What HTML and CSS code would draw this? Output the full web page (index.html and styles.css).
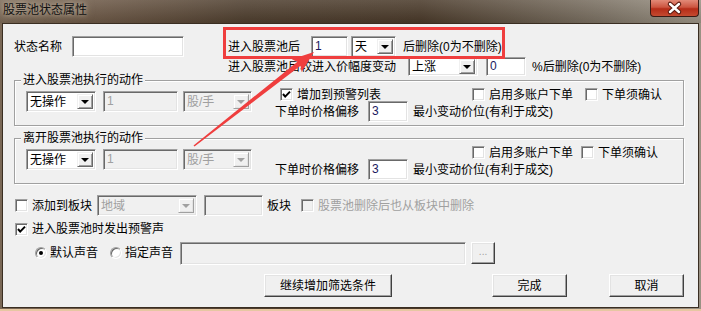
FILE: index.html
```html
<!doctype html>
<html>
<head>
<meta charset="UTF-8">
<title>股票池状态属性</title>
<link rel="stylesheet" href="styles.css">
</head>
<body>
<div class="win">
  <div class="title">
    <span class="caption">股票池状态属性</span>
    <span class="close">
      <svg width="47" height="16" viewBox="0 0 47 16">
        <path d="M19 4 L28 12 M28 4 L19 12" stroke="#5a1a10" stroke-width="4.5" stroke-linecap="round"/>
        <path d="M19 4 L28 12 M28 4 L19 12" stroke="#fff" stroke-width="2.4" stroke-linecap="round"/>
      </svg>
    </span>
  </div>

  <div class="client">
    <!-- 第一行 -->
    <div class="row r1">
      <span>状态名称</span>
      <div class="field name"></div>
      <span class="after-name">进入股票池后</span>
      <div class="field days num">1</div>
      <div class="combo unit"><span class="v">天</span><i class="drop"></i></div>
      <span class="tail">后删除(0为不删除)</span>
    </div>
    <div class="row r2">
      <span>进入股票池后较进入价幅度变动</span>
      <div class="combo trend"><span class="v">上涨</span><i class="drop"></i></div>
      <div class="field pct num">0</div>
      <span class="tail2">%后删除(0为不删除)</span>
    </div>

    <!-- 进入 -->
    <div class="group g1">
      <span class="legend">进入股票池执行的动作</span>
      <div class="acts">
        <div class="combo op"><span class="v">无操作</span><i class="drop"></i></div>
        <div class="field qty off">1</div>
        <div class="combo per off"><span class="v">股/手</span><i class="drop"></i></div>
      </div>
      <div class="opts">
        <div class="line1">
          <label class="chk w1"><i class="box on"><svg width="11" height="11" viewBox="0 0 11 11"><path d="M2 5 L4.2 7.6 L9 2.6" fill="none" stroke="#000" stroke-width="2"/></svg></i>增加到预警列表</label>
          <label class="chk w2"><i class="box"></i>启用多账户下单</label>
          <label class="chk"><i class="box"></i>下单须确认</label>
        </div>
        <div class="line2">
          <span>下单时价格偏移</span>
          <div class="field off3 num">3</div>
          <span class="tick">最小变动价位(有利于成交)</span>
        </div>
      </div>
    </div>

    <!-- 离开 -->
    <div class="group g2">
      <span class="legend">离开股票池执行的动作</span>
      <div class="acts">
        <div class="combo op"><span class="v">无操作</span><i class="drop"></i></div>
        <div class="field qty off">1</div>
        <div class="combo per off"><span class="v">股/手</span><i class="drop"></i></div>
      </div>
      <div class="opts">
        <div class="line1 skip">
          <label class="chk w3"><i class="box"></i>启用多账户下单</label>
          <label class="chk"><i class="box"></i>下单须确认</label>
        </div>
        <div class="line2">
          <span>下单时价格偏移</span>
          <div class="field off3 num">3</div>
          <span class="tick">最小变动价位(有利于成交)</span>
        </div>
      </div>
    </div>

    <div class="row bk">
      <label class="chk"><i class="box"></i>添加到板块</label>
      <div class="combo area off"><span class="v">地域</span><i class="drop"></i></div>
      <div class="field blk off"></div>
      <span class="bk-lbl">板块</span>
      <label class="chk dim"><i class="box off"></i>股票池删除后也从板块中删除</label>
    </div>

    <div class="row warn">
      <label class="chk"><i class="box on"><svg width="11" height="11" viewBox="0 0 11 11"><path d="M2 5 L4.2 7.6 L9 2.6" fill="none" stroke="#000" stroke-width="2"/></svg></i>进入股票池时发出预警声</label>
    </div>

    <div class="row sound">
      <label class="rad"><i class="dot on"></i>默认声音</label>
      <label class="rad r-2"><i class="dot"></i>指定声音</label>
      <div class="field path off"></div>
      <div class="btn browse">...</div>
    </div>

    <div class="row btns">
      <div class="btn more">继续增加筛选条件</div>
      <div class="btn ok">完成</div>
      <div class="btn cancel">取消</div>
    </div>
  </div>

  <div class="mark"></div>
  <svg class="arrow" width="701" height="311" viewBox="0 0 701 311">
    <polygon points="194.5,146.6 300.5,65.7 301.6,71.9 314,52 291.8,59.3 297.5,61.7 193.5,145.4" fill="#ef3e3e"/>
  </svg>
</div>
</body>
</html>
```

FILE: styles.css
```css
body{margin:0;font:12px/14px "Liberation Sans","Noto Sans CJK SC",sans-serif;color:#000;}
.win{position:relative;width:701px;height:311px;overflow:hidden;display:flex;flex-direction:column;
  background:linear-gradient(to top,#e6c7a2 0,#e6c7a2 2px,transparent 2px),
  linear-gradient(90deg,#7a6856 0%,#6a5644 14%,#4d3d2d 35%,#483828 60%,#7a7062 86%,#9a9284 100%);}
.title{height:23px;display:flex;align-items:flex-start;justify-content:space-between;
  background:linear-gradient(180deg,rgba(255,255,255,.14),rgba(0,0,0,.08));}
.caption{margin:3px 0 0 3px;line-height:14px;color:#111;
  text-shadow:0 0 5px rgba(215,200,180,.9),0 0 10px rgba(200,185,160,.6);}
.close{width:47px;height:16px;margin-right:2px;border:1px solid #3a1a14;border-top:0;border-radius:0 0 4px 4px;
  background:linear-gradient(180deg,#e28a78 0%,#cc5540 45%,#b52c18 55%,#c44a30 100%);display:flex;}
.close svg{display:block;}

.client{flex:1;margin:0 2px 3px 2px;border:1px solid #3a2e22;background:#f0f0f0;}

.row{display:flex;align-items:center;}
.r1{margin-top:12px;height:21px;padding-left:11px;}
.r2{height:19px;padding-left:225px;}
.after-name{margin-left:44px;}
.tail{margin-left:7px;}
.tail2{margin-left:6px;}

/* 凹陷输入框 */
.field,.combo{box-sizing:border-box;height:21px;border:1px solid;border-color:#a0a0a0 #fff #fff #a0a0a0;
  box-shadow:inset 1px 1px 0 #696969,inset -1px -1px 0 #e3e3e3;background:#fff;display:flex;align-items:center;}
.field{padding:0 3px;}
.num{color:#1a1a60;align-items:flex-start;padding-top:2px;}
.off{background:#f0f0f0;color:#a0a0a0;}
.combo{padding:2px 2px 2px 3px;}
.combo .v{flex:1;}
.drop{box-sizing:border-box;width:16px;align-self:stretch;border:1px solid;border-color:#f0f0f0 #696969 #696969 #f0f0f0;
  box-shadow:inset 1px 1px 0 #fff,inset -1px -1px 0 #a0a0a0;background:#f0f0f0;display:flex;align-items:center;justify-content:center;}
.drop::after{content:"";border-left:4px solid transparent;border-right:4px solid transparent;border-top:4px solid #000;margin-top:1px;}
.off .drop::after{border-top-color:#a0a0a0;}
.off .drop{border-color:#f0f0f0 #a0a0a0 #a0a0a0 #f0f0f0;box-shadow:inset 1px 1px 0 #fff,inset -1px -1px 0 #e3e3e3;}

.name{margin-left:10px;width:112px;}
.days{margin-left:11px;width:37px;}
.unit{margin-left:3px;width:45px;}
.trend{margin-left:12px;width:70px;height:19px;padding-top:1px;padding-bottom:1px;}
.pct{margin-left:8px;width:40px;height:19px;padding-top:1px;}

/* 分组框 */
.group{position:relative;box-sizing:border-box;width:670px;height:46px;margin-left:11px;
  border:1px solid #a0a0a0;box-shadow:inset 1px 1px 0 #fff,1px 1px 0 #fff;display:flex;align-items:flex-start;padding:7px 0 0 11px;}
.g1{margin-top:4px;}
.g2{margin-top:12px;}
.legend{position:absolute;top:-8px;left:6px;padding:0 2px;background:#f0f0f0;}
.acts{display:flex;margin-top:3px;}
.op{width:70px;}
.qty{width:75px;margin-left:7px;align-items:flex-start;padding-top:2px;}
.per{width:69px;margin-left:5px;}
.opts{margin-left:23px;display:flex;flex-direction:column;}
.line1{height:13px;display:flex;align-items:center;padding-left:5px;}
.line1.skip{padding-left:197px;}
.line2{height:21px;display:flex;align-items:center;}
.off3{margin-left:9px;width:40px;}
.tick{margin-left:5px;}
.w1{width:192px;}
.w2{width:113px;}
.w3{width:109px;}

/* 复选框、单选框 */
.chk,.rad{display:flex;align-items:center;white-space:nowrap;}
.box{box-sizing:border-box;width:13px;height:13px;margin-right:4px;border:1px solid;border-color:#a0a0a0 #fff #fff #a0a0a0;
  box-shadow:inset 1px 1px 0 #696969,inset -1px -1px 0 #e3e3e3;background:#fff;display:flex;align-items:center;justify-content:center;}
.box svg{display:block;}
.box.off{background:#f0f0f0;}
.dim{color:#a0a0a0;margin-left:10px;}
.dot{position:relative;box-sizing:border-box;width:12px;height:12px;margin-right:3px;border-radius:50%;border:1px solid;
  border-color:#a0a0a0 #fff #fff #a0a0a0;box-shadow:inset 1px 1px 0 #696969,inset -1px -1px 0 #e3e3e3;background:#fff;}
.dot.on::after{content:"";position:absolute;left:3px;top:3px;width:4px;height:4px;border-radius:50%;background:#000;}

.bk{margin-top:11px;height:21px;padding-left:12px;}
.area{margin-left:5px;width:100px;}
.blk{margin-left:7px;width:59px;}
.bk-lbl{margin-left:4px;}
.warn{margin-top:5px;height:16px;padding-left:12px;}
.sound{margin-top:4px;height:24px;padding-left:32px;}
.r-2{margin-left:12px;}
.path{margin-left:7px;width:286px;height:23px;}

/* 按钮 */
.btn{box-sizing:border-box;height:23px;display:flex;align-items:center;justify-content:center;background:#f0f0f0;
  border:1px solid;border-color:#fff #404040 #404040 #fff;box-shadow:inset -1px -1px 0 #a0a0a0,inset 1px 1px 0 #e3e3e3;}
.browse{margin-left:5px;width:24px;height:22px;color:#a0a0a0;font-size:10px;align-items:flex-end;padding-bottom:4px;}
.btns{margin-top:9px;height:23px;padding-left:261px;}
.more{width:128px;}
.ok{margin-left:100px;width:75px;}
.cancel{margin-left:42px;width:75px;}

/* 截图标注 */
.mark{position:absolute;left:223px;top:27px;width:282px;height:32px;box-sizing:border-box;border:3px solid #ef3e3e;}
.arrow{position:absolute;left:0;top:0;pointer-events:none;}
```
